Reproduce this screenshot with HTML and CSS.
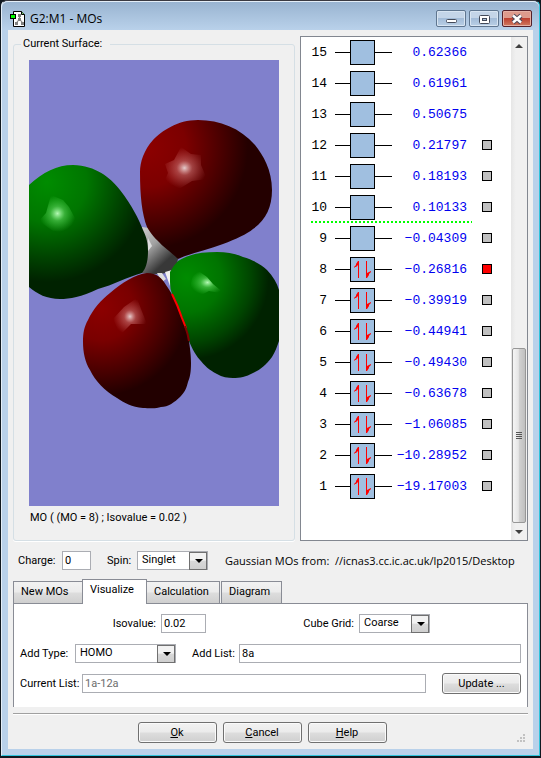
FILE: index.html
```html
<!DOCTYPE html>
<html lang="en">
<head>
    <title>G2:M1 - MOs</title>
    <meta charset="UTF-8">
    <meta name="viewport" content="width=device-width, initial-scale=1.0">
    <link rel="stylesheet" href="styles.css">
</head>
<body>
<div class="window">
    <header class="titlebar">
        <svg class="app-icon" width="16" height="16" viewBox="0 0 16 16">
            <path d="M3.500 .5h8l3 3v12h-11z" fill="#fff" stroke="#000"/>
            <path d="M11.500 .5v3h3" fill="#7c7" stroke="#000"/>
            <path d="M9.500 4v5M9.500 8l-4 5M9.500 8l4 5" stroke="#888" fill="none" stroke-width="1.200"/>
            <path d="M8 3h3v3H8zM8 7h3v3H8zM5 11h3v3H5zM11 11h3v3h-3z" fill="#808080"/>
            <rect x=".5" y="3.500" width="5" height="4" fill="#0f0" stroke="#000"/>
        </svg>
        <h1 class="title">G2:M1 - MOs</h1>
        <button type="button" class="win-btn">
            <svg width="28" height="14" viewBox="0 0 28 14"><rect x="9.500" y="7.500" width="10" height="3" rx="1" fill="#fff" stroke="#444b5a"/></svg>
        </button>
        <button type="button" class="win-btn">
            <svg width="28" height="14" viewBox="0 0 28 14"><rect x="9.500" y="3.500" width="10" height="8" rx="1" fill="#fff" stroke="#444b5a"/><rect x="12.500" y="6.500" width="4" height="2" fill="#a9bfd8" stroke="#444b5a"/></svg>
        </button>
        <button type="button" class="win-btn close">
            <svg width="28" height="14" viewBox="0 0 28 14"><path d="M10 3.500l8 7M18 3.500l-8 7" stroke="#4d4656" stroke-width="4.500"/><path d="M10 3.500l8 7M18 3.500l-8 7" stroke="#fff" stroke-width="2.500"/></svg>
        </button>
    </header>

    <main class="client">
        <div class="views">
            <fieldset class="surface">
                <legend>Current Surface:</legend>
                <svg class="canvas" width="250" height="446" viewBox="0 0 250 446">
                    <defs>
                        <radialGradient id="redTop" gradientUnits="userSpaceOnUse" cx="118" cy="88" r="112">
                            <stop offset="0" stop-color="#8c0000"/><stop offset=".35" stop-color="#7c0000"/><stop offset=".7" stop-color="#440000"/><stop offset=".9" stop-color="#240000"/>
                        </radialGradient>
                        <radialGradient id="redLow" gradientUnits="userSpaceOnUse" cx="72" cy="248" r="92">
                            <stop offset="0" stop-color="#8c0000"/><stop offset=".35" stop-color="#7a0000"/><stop offset=".7" stop-color="#480000"/><stop offset=".95" stop-color="#220000"/>
                        </radialGradient>
                        <radialGradient id="greenLeft" gradientUnits="userSpaceOnUse" cx="18" cy="122" r="100">
                            <stop offset="0" stop-color="#008c00"/><stop offset=".4" stop-color="#007600"/><stop offset=".75" stop-color="#004400"/><stop offset="1" stop-color="#002200"/>
                        </radialGradient>
                        <radialGradient id="greenRight" gradientUnits="userSpaceOnUse" cx="158" cy="218" r="86">
                            <stop offset="0" stop-color="#008c00"/><stop offset=".4" stop-color="#007400"/><stop offset=".75" stop-color="#004400"/><stop offset=".95" stop-color="#002200"/>
                        </radialGradient>
                        <linearGradient id="atom" x1="0" y1="0" x2=".7" y2="1">
                            <stop offset="0" stop-color="#ccc"/><stop offset=".4" stop-color="#a0a0a0"/><stop offset=".8" stop-color="#383838"/>
                        </linearGradient>
                        <radialGradient id="glow">
                            <stop offset="0" stop-color="#fff" stop-opacity=".8"/><stop offset=".35" stop-color="#fbb" stop-opacity=".35"/><stop offset="1" stop-color="#f99" stop-opacity="0"/>
                        </radialGradient>
                        <radialGradient id="glowGreen">
                            <stop offset="0" stop-color="#bfffbf" stop-opacity=".95"/><stop offset=".4" stop-color="#8f8" stop-opacity=".4"/><stop offset="1" stop-color="#6f6" stop-opacity="0"/>
                        </radialGradient>
                    </defs>
                    <rect width="250" height="446" fill="#8080cc"/>
                    <!-- atom and bonds -->
                    <path d="M113 167Q136 168 149 199Q148 207 141 212Q127 216 113 213Z" fill="url(#atom)"/>
                    <path d="M128 213L133 222L137 219L133 213Z" fill="#ddd"/>
                    <path d="M136 212L141 226L143 210Z" fill="#f2f2ee"/>
                    <path d="M141 211L144 222L143 230Z" fill="#aaa"/>
                    <!-- lobes -->
                    <path fill="url(#greenLeft)" d="M0 125C14 112 28 105 44 105C67 106 81 117 91 130C104 147 109 158 114 170C118 178 119 184 119 191C119 202 117 208 113 213C98 217 84 225 69 229C52 237 41 239 31 239C18 239 8 234 0 227Z"/>
                    <path fill="url(#redTop)" d="M169 60C148 60 133 71 124 80C115 90 111 102 111 112C111 136 113 154 118 167C123 176 130 182 134 186C140 191 145 195 149 199C162 193 179 190 194 184C207 179 218 174 224 169C237 160 243 147 243 130C243 110 234 95 226 85C211 68 191 60 169 60Z"/>
                    <path fill="url(#redLow)" d="M118 213C128 213 133 218 137 225C145 236 150 248 153 257C157 267 159 276 160 281C161 289 162 294 162 303C162 312 161 317 159 322C157 330 155 333 151 337C146 342 139 347 132 347C127 349 119 348 114 348C103 347 95 343 88 338C76 331 66 321 61 310C56 302 54 292 54 282C54 273 55 267 59 260C64 249 72 240 81 233C93 223 106 214 118 213Z"/>
                    <path fill="url(#greenRight)" d="M149 201C160 194 173 192 188 192C198 192 207 194 214 197C224 200 232 204 238 210C244 216 248 223 250 230V281C248 287 246 292 243 297C237 305 231 310 224 313C217 317 211 318 204 318C199 318 193 317 188 314C180 310 175 305 171 300C165 293 162 286 160 281C156 265 150 248 143 234Q141 229 141 222V212Q144 206 149 201Z"/>
                    <path d="M143 234Q149 246 153 258L157 268" fill="none" stroke="#f00" stroke-width="2"/>
                    <path d="M156 266Q159 274 160 281" fill="none" stroke="#800000" stroke-width="2"/>
                    <!-- highlights -->
                    <path fill="url(#glow)" d="M152 87L162 94L172 95L172 105L178 119L163 121L150 129L144 125L133 127L139 113L136 104L145 100Z"/>
                    <path fill="url(#glowGreen)" d="M22 135L34 140L40 147L47 160L42 166L37 172L24 171L10 161L17 153Z"/>
                    <path fill="url(#glow)" d="M108 238L112 249L118 264L102 264L91 275L84 259L95 247Z"/>
                    <path fill="url(#glowGreen)" d="M168 210L178 217L184 224L196 234L180 231L172 235L161 228L163 218Z"/>
                    <path fill="#ddd" d="M119 178L123 186L119 191Z"/>
                </svg>
                <p class="caption">MO ( (MO = 8) ; Isovalue = 0.02 )</p>
            </fieldset>

            <section class="orbitals">
                <div class="orbital-list" id="orbitals"></div>
                <div class="scrollbar">
                    <span class="arrow up"></span>
                    <span class="track"></span>
                    <span class="thumb"><i></i><i></i><i></i><i></i></span>
                    <span class="arrow down"></span>
                </div>
            </section>
        </div>

        <div class="status">
            <label class="w-charge" for="charge">Charge:</label>
            <input class="text w-small" type="text" id="charge" value="0">
            <label class="w-spin" for="spin">Spin:</label>
            <span class="select w-combo"><select id="spin"><option>Singlet</option></select></span>
            <span class="source">Gaussian MOs from:&nbsp; //icnas3.cc.ic.ac.uk/lp2015/Desktop</span>
        </div>

        <nav class="tabs">
            <button type="button" class="tab tab-new">New MOs</button>
            <button type="button" class="tab tab-vis active">Visualize</button>
            <button type="button" class="tab tab-calc">Calculation</button>
            <button type="button" class="tab tab-dia">Diagram</button>
        </nav>
        <form class="panel">
            <div class="row">
                <label class="w-iso" for="isovalue">Isovalue:</label>
                <input class="text w-iso-box" type="text" id="isovalue" value="0.02">
                <label class="w-grid" for="grid">Cube Grid:</label>
                <span class="select w-combo"><select id="grid"><option>Coarse</option></select></span>
            </div>
            <div class="row">
                <label class="w-type" for="type">Add Type:</label>
                <span class="select w-type-box"><select id="type"><option>HOMO</option></select></span>
                <label class="w-list" for="list">Add List:</label>
                <input class="text grow" type="text" id="list" value="8a">
            </div>
            <div class="row">
                <label class="w-current" for="current">Current List:</label>
                <input class="text grow" type="text" id="current" value="1a-12a" disabled>
                <button type="button" class="push update">Update ...</button>
            </div>
        </form>

        <footer class="actions">
            <button type="button" class="push"><u>O</u>k</button>
            <button type="button" class="push"><u>C</u>ancel</button>
            <button type="button" class="push"><u>H</u>elp</button>
            <svg class="grip" width="9" height="9" viewBox="0 0 9 9"><path d="M6 0h2v2H6zM3 3h2v2H3zM6 3h2v2H6zM0 6h2v2H0zM3 6h2v2H3zM6 6h2v2H6z" fill="#c2c2c2"/></svg>
        </footer>
    </main>
</div>

<script>
    const energies = {
        15: '0.62366', 14: '0.61961', 13: '0.50675', 12: '0.21797', 11: '0.18193',
        10: '0.10133', 9: '−0.04309', 8: '−0.26816', 7: '−0.39919', 6: '−0.44941',
        5: '−0.49430', 4: '−0.63678', 3: '−1.06085', 2: '−10.28952', 1: '−19.17003'
    };
    const HOMO = 8;
    const list = document.getElementById('orbitals');
    const spins = '<svg width="23" height="23" viewBox="0 0 23 23" fill="#f00"><path d="M7 20V7L5 9H4L3 10V9L5 7V6L7 3H8V20Z"/><path d="M15 3H16V15L18 14L20 13V14L18 16V17L16 20H15Z"/></svg>';

    // Highest orbital first, surfaces exist only for 1-12
    for (let n = 15; n >= 1; n--) {
        const row = document.createElement('div');
        row.className = 'orbital';
        row.innerHTML = `
            <div class="level${n === 10 ? ' gap-line' : ''}">
                <label class="num" for="mo${n}">${n}</label>
                <span class="stub"></span>
                <span class="box">${n <= HOMO ? spins : ''}</span>
                <span class="stub right"></span>
                <span class="energy">${energies[n]}</span>
            </div>
            ${n <= 12 ? `<input type="checkbox" class="mark" id="mo${n}"${n === 8 ? ' checked' : ''}>` : ''}`;
        list.appendChild(row);
    }
</script>
</body>
</html>
```

FILE: styles.css
```css
* {
    box-sizing: border-box;
}

body {
    margin: 0;
    background: #101820;
    font-family: Roboto, "Liberation Sans", Arial, sans-serif;
    font-size: 11px;
    line-height: 16px;
    color: #000;
}

button, input, select {
    font: inherit;
    color: inherit;
    margin: 0;
}

label {
    flex-shrink: 0;
    white-space: nowrap;
}

.window {
    margin: 0 1px 1px;
    padding: 0 6px 6px;
    background: #b9d1ea;
    border: 1px solid #e4eef8;
    border-top-color: #3a3a42;
    border-right-color: #2fc4dc;
    border-bottom-color: #2fc4dc;
    border-radius: 6px 6px 0 0;
}

/* title bar */
.titlebar {
    display: flex;
    align-items: center;
    gap: 3px;
    height: 29px;
    margin: 0 -6px;
    padding: 5px 7px 0 8px;
    background: linear-gradient(#99b4d1, #b9d1ea);
    border-top: 1px solid #e4eef8;
    border-radius: 6px 6px 0 0;
}

.title {
    flex: 1;
    margin: 0 0 0 1px;
    font-family: "Open Sans", sans-serif;
    font-size: 12px;
    font-weight: normal;
}

.win-btn {
    display: flex;
    align-items: center;
    justify-content: center;
    width: 30px;
    height: 17px;
    padding: 0;
    border: 1px solid #5f7690;
    border-radius: 2px;
    background: linear-gradient(#c4d5e8 45%, #a3bcd8 50%, #b9cfe6);
    box-shadow: inset 0 0 0 1px #d8e5f2;
}

.win-btn.close {
    border-color: #53202a;
    background: linear-gradient(#dd9a8c 45%, #bd4030 50%, #cf7a60);
    box-shadow: inset 0 0 0 1px #e5b0a4;
}

.client {
    background: #f0f0f0;
    padding: 6px 5px;
}

/* surface and orbital list */
.views {
    display: flex;
    gap: 5px;
}

.surface {
    width: 282px;
    margin: 0;
    padding: 8px 15px 14px;
    border: 1px solid #d5dfe5;
    border-radius: 3px;
    box-shadow: 0 1px 0 #fff;
}

.surface legend {
    padding: 0 8px 0 2px;
    margin-left: -8px;
}

.canvas {
    display: block;
}

.caption {
    margin: 4px 0 0 1px;
}

.orbitals {
    flex: 1;
    display: flex;
    border: 1px solid #828790;
    background: #fff;
}

.orbital-list {
    flex: 1;
    padding: 2px 0 0 10px;
    font-family: "Liberation Mono", monospace;
    font-size: 13px;
}

.orbital {
    display: flex;
    align-items: flex-start;
    gap: 10px;
    margin-bottom: 2px;
}

.level {
    display: flex;
    align-items: center;
    width: 161px;
    height: 29px;
    padding-bottom: 2px;
}

/* boundary drawn as a dotted rule under the row */
.gap-line {
    background: repeating-linear-gradient(90deg, #0f0 0 2px, #fff 2px 4px) bottom / 100% 2px no-repeat;
}

.num {
    width: 16px;
    margin-right: 8px;
    text-align: right;
}

.stub {
    width: 15px;
    height: 1px;
    background: #000;
}

.stub.right {
    width: 17px;
}

.box {
    width: 25px;
    height: 25px;
    border: 1px solid #000;
    background: #a0bfe0;
}

.box svg {
    display: block;
}

.energy {
    flex: 1;
    padding-right: 5px;
    text-align: right;
    color: #0000f0;
}

.mark {
    appearance: none;
    width: 10px;
    height: 10px;
    margin-top: 8px;
    border: 1px solid #000;
    background: #c0c0c0;
}

.mark:checked {
    background: #f00;
}

.scrollbar {
    display: flex;
    flex-direction: column;
    width: 16px;
    background: linear-gradient(90deg, #e6e6e6, #f0f0f0 30%);
}

.track {
    flex: 1;
}

.arrow {
    height: 17px;
}

.arrow::after {
    content: "";
    display: block;
    width: 0;
    margin: 7px auto 0;
    border: 4px solid transparent;
    border-top: 4px solid #404040;
    border-bottom: 0;
}

.arrow.up::after {
    border-top: 0;
    border-bottom: 4px solid #404040;
}

.thumb {
    display: flex;
    flex-direction: column;
    align-items: center;
    justify-content: center;
    gap: 1px;
    height: 175px;
    margin: 0 1px;
    border: 1px solid #979797;
    border-radius: 2px;
    background: linear-gradient(90deg, #f5f5f5, #e6e6e6 45%, #d2d2d2 50%, #bfbfbf);
}

.thumb i {
    width: 6px;
    height: 1px;
    background: #555;
}

/* fields */
.text {
    height: 19px;
    min-width: 0;
    padding: 0 2px;
    border: 1px solid #abadb3;
    background: #fff;
}

.text:disabled {
    color: #6d6d6d;
}

.select {
    display: inline-block;
    position: relative;
    height: 19px;
}

.select select {
    display: block;
    appearance: none;
    width: 100%;
    height: 19px;
    padding: 0 18px 2px 4px;
    border: 1px solid #abadb3;
    border-radius: 0;
    background: #fff;
}

.select::before {
    content: "";
    position: absolute;
    top: 1px;
    right: 1px;
    width: 16px;
    height: 16px;
    border: 1px solid #707070;
    background: linear-gradient(#f2f2f2 45%, #d8d8d8 50%, #cfcfcf);
    pointer-events: none;
}

.select::after {
    content: "";
    position: absolute;
    top: 8px;
    right: 5px;
    border: 4px solid transparent;
    border-top-color: #000;
    border-bottom: 0;
    pointer-events: none;
}

.grow {
    flex: 1;
}

.status {
    display: flex;
    align-items: center;
    padding: 10px 6px 0 5px;
}

.w-charge { width: 44px; }
.w-small { width: 29px; }
.w-spin { width: 46px; padding-left: 16px; }
.w-combo { width: 71px; }
.w-iso { width: 141px; padding-right: 5px; text-align: right; }
.w-iso-box { width: 45px; }
.w-grid { width: 153px; padding-right: 5px; text-align: right; }
.w-type { width: 55px; }
.w-type-box { width: 101px; }
.w-list { width: 63px; padding-left: 16px; }
.w-current { width: 62px; }

.source {
    flex: 1;
    margin-left: 17px;
    overflow: hidden;
    white-space: nowrap;
    font-family: "Open Sans", sans-serif;
}

/* tabs */
.tabs {
    display: flex;
    align-items: flex-end;
    margin-top: 9px;
}

.tab {
    height: 22px;
    padding: 0 0 2px 7px;
    border: 1px solid #898c95;
    border-bottom: 0;
    background: linear-gradient(#f2f2f2, #ebebeb 48%, #dddddd 52%, #cfcfcf);
    text-align: left;
}

/* tab page joins the active tab */
.tab.active {
    position: relative;
    height: 25px;
    margin-bottom: -1px;
    padding-bottom: 4px;
    background: #fff;
}

.tab-new { width: 69px; border-right: 0; }
.tab-vis { width: 65px; }
.tab-calc { width: 73px; border-left: 0; }
.tab-dia { width: 61px; margin-left: 1px; }

.panel {
    display: flex;
    flex-direction: column;
    gap: 9px;
    padding: 9px 6px 13px;
    border: 1px solid #898c95;
    border-bottom: 0;
    background: #fff;
}

.row {
    display: flex;
    align-items: center;
    height: 21px;
}

.push {
    width: 79px;
    height: 21px;
    padding: 0;
    border: 1px solid #707070;
    border-radius: 3px;
    background: linear-gradient(#f2f2f2, #ebebeb 48%, #dddddd 52%, #cfcfcf);
    box-shadow: inset 0 0 0 1px #fafafa;
}

.update {
    margin-left: 16px;
}

.actions {
    display: flex;
    justify-content: center;
    gap: 6px;
    position: relative;
    margin-top: 6px;
    padding: 8px 17px 0 0;
    border-top: 1px solid #a0a0a0;
    box-shadow: inset 0 1px 0 #fff;
}

.grip {
    position: absolute;
    right: 2px;
    bottom: 0;
}
```
